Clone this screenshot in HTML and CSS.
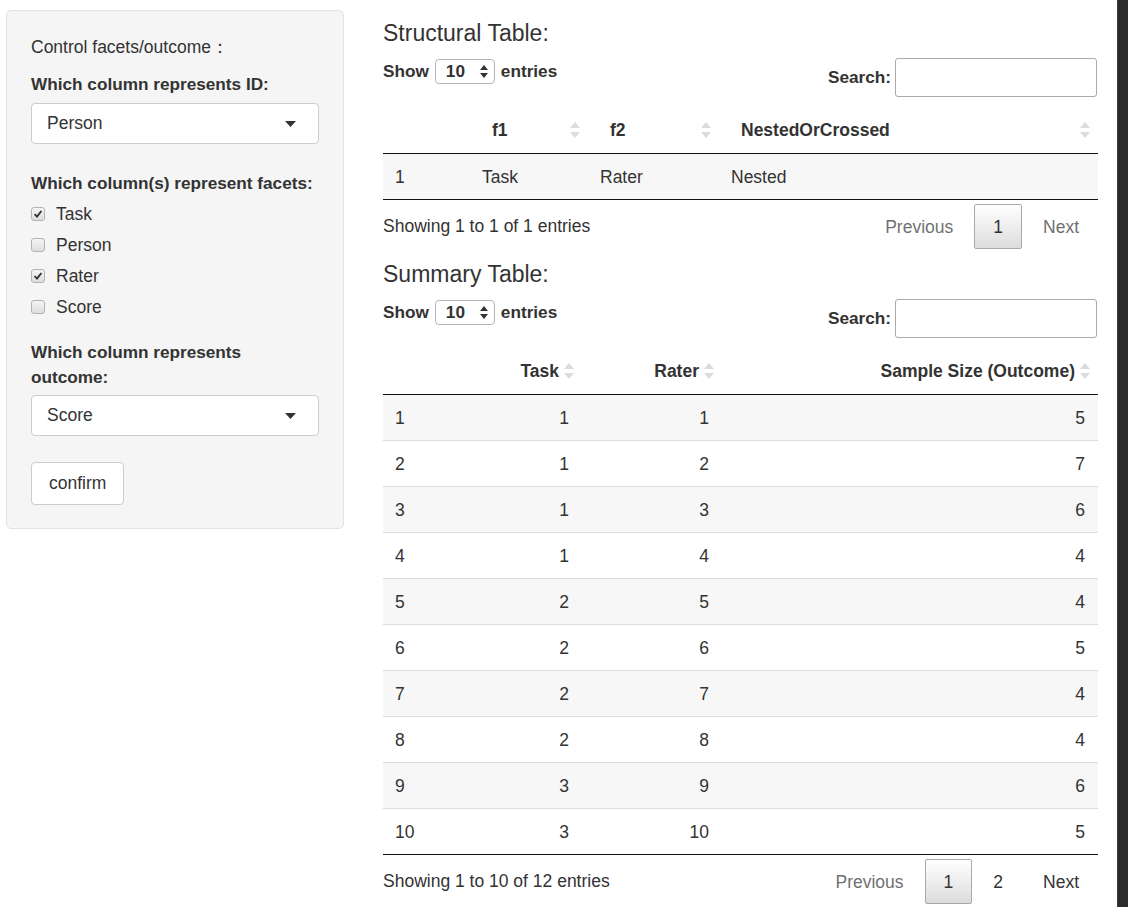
FILE: index.html
```html
<!DOCTYPE html>
<html>
<head>
<meta charset="utf-8">
<link rel="stylesheet" href="styles.css">
</head>
<body>
<div class="sidebar">
  <div class="well">
    <div class="intro">Control facets/outcome：</div>
    <div class="label first">Which column represents ID:</div>
    <div class="select"><span>Person</span><svg class="caret" width="11" height="6" viewBox="0 0 11 6"><polygon points="0,0 11,0 5.5,6" fill="#333"/></svg></div>
    <div class="label facets">Which column(s) represent facets:</div>
    <div class="checks">
      <div class="check"><span class="box"><svg width="12" height="12" viewBox="0 0 12 12"><path d="M2.6 6.2 L5 8.6 L9.4 3" fill="none" stroke="#333" stroke-width="1.9"/></svg></span>Task</div>
      <div class="check"><span class="box"></span>Person</div>
      <div class="check"><span class="box"><svg width="12" height="12" viewBox="0 0 12 12"><path d="M2.6 6.2 L5 8.6 L9.4 3" fill="none" stroke="#333" stroke-width="1.9"/></svg></span>Rater</div>
      <div class="check"><span class="box"></span>Score</div>
    </div>
    <div class="label outcome">Which column represents<br>outcome:</div>
    <div class="select second"><span>Score</span><svg class="caret" width="11" height="6" viewBox="0 0 11 6"><polygon points="0,0 11,0 5.5,6" fill="#333"/></svg></div>
    <button class="btn">confirm</button>
  </div>
</div>

<div class="main">
  <section class="dt first-section">
    <h3 class="title">Structural Table:</h3>
    <div class="controls">
      <div class="length">Show <span class="len-select">10<svg width="8" height="13" viewBox="0 0 8 13"><polygon points="4,0 8,5 0,5" fill="#333"/><polygon points="0,8 8,8 4,13" fill="#333"/></svg></span> entries</div>
      <div class="search">Search:<span class="search-input"></span></div>
    </div>
    <table class="grid struct">
      <colgroup><col style="width:87px"><col style="width:118px"><col style="width:131px"><col></colgroup>
      <thead>
        <tr><th></th><th class="sort">f1<svg class="sorticon" width="10" height="16" viewBox="0 0 10 16"><polygon points="5,0 10,6 0,6" fill="#dcdcdc"/><polygon points="0,10 10,10 5,16" fill="#dcdcdc"/></svg></th><th class="sort">f2<svg class="sorticon" width="10" height="16" viewBox="0 0 10 16"><polygon points="5,0 10,6 0,6" fill="#dcdcdc"/><polygon points="0,10 10,10 5,16" fill="#dcdcdc"/></svg></th><th class="sort">NestedOrCrossed<svg class="sorticon" width="10" height="16" viewBox="0 0 10 16"><polygon points="5,0 10,6 0,6" fill="#dcdcdc"/><polygon points="0,10 10,10 5,16" fill="#dcdcdc"/></svg></th></tr>
      </thead>
      <tbody>
        <tr class="odd"><td>1</td><td>Task</td><td>Rater</td><td>Nested</td></tr>
      </tbody>
    </table>
    <div class="footer">
      <div class="info">Showing 1 to 1 of 1 entries</div>
      <div class="paging"><span class="pg disabled">Previous</span><span class="pg current">1</span><span class="pg disabled">Next</span></div>
    </div>
  </section>

  <section class="dt second-section">
    <h3 class="title">Summary Table:</h3>
    <div class="controls">
      <div class="length">Show <span class="len-select">10<svg width="8" height="13" viewBox="0 0 8 13"><polygon points="4,0 8,5 0,5" fill="#333"/><polygon points="0,8 8,8 4,13" fill="#333"/></svg></span> entries</div>
      <div class="search">Search:<span class="search-input"></span></div>
    </div>
    <table class="grid summary">
      <colgroup><col style="width:87px"><col style="width:112px"><col style="width:140px"><col></colgroup>
      <thead>
        <tr><th></th><th class="sort num">Task<svg class="sorticon" width="10" height="16" viewBox="0 0 10 16"><polygon points="5,0 10,6 0,6" fill="#dcdcdc"/><polygon points="0,10 10,10 5,16" fill="#dcdcdc"/></svg></th><th class="sort num">Rater<svg class="sorticon" width="10" height="16" viewBox="0 0 10 16"><polygon points="5,0 10,6 0,6" fill="#dcdcdc"/><polygon points="0,10 10,10 5,16" fill="#dcdcdc"/></svg></th><th class="sort num">Sample Size (Outcome)<svg class="sorticon" width="10" height="16" viewBox="0 0 10 16"><polygon points="5,0 10,6 0,6" fill="#dcdcdc"/><polygon points="0,10 10,10 5,16" fill="#dcdcdc"/></svg></th></tr>
      </thead>
      <tbody>
        <tr class="odd"><td>1</td><td class="num">1</td><td class="num">1</td><td class="num">5</td></tr>
        <tr><td>2</td><td class="num">1</td><td class="num">2</td><td class="num">7</td></tr>
        <tr class="odd"><td>3</td><td class="num">1</td><td class="num">3</td><td class="num">6</td></tr>
        <tr><td>4</td><td class="num">1</td><td class="num">4</td><td class="num">4</td></tr>
        <tr class="odd"><td>5</td><td class="num">2</td><td class="num">5</td><td class="num">4</td></tr>
        <tr><td>6</td><td class="num">2</td><td class="num">6</td><td class="num">5</td></tr>
        <tr class="odd"><td>7</td><td class="num">2</td><td class="num">7</td><td class="num">4</td></tr>
        <tr><td>8</td><td class="num">2</td><td class="num">8</td><td class="num">4</td></tr>
        <tr class="odd"><td>9</td><td class="num">3</td><td class="num">9</td><td class="num">6</td></tr>
        <tr><td>10</td><td class="num">3</td><td class="num">10</td><td class="num">5</td></tr>
      </tbody>
    </table>
    <div class="footer">
      <div class="info">Showing 1 to 10 of 12 entries</div>
      <div class="paging"><span class="pg disabled">Previous</span><span class="pg current">1</span><span class="pg">2</span><span class="pg">Next</span></div>
    </div>
  </section>
</div>

<div class="edge"></div>
</body>
</html>
```
FILE: styles.css
```css
* { box-sizing: border-box; }

body {
  margin: 0;
  padding-left: 6px;
  font-family: "Liberation Sans", Arial, sans-serif;
  font-size: 17.5px;
  color: #333;
  display: flex;
  min-height: 100vh;
  background: #fff;
}

/* Sidebar */
.sidebar {
  width: 338px;
  flex: none;
  padding-top: 10px;
}

.well {
  background: #f5f5f5;
  border: 1px solid #e3e3e3;
  border-radius: 5px;
  padding: 24px 24px 23px;
}

.intro {
  line-height: 24px;
}

.label {
  font-weight: bold;
  font-size: 17.2px;
  line-height: 25px;
}
.label.first { margin-top: 13px; }
.label.facets { margin-top: 27px; }
.label.outcome { margin-top: 18px; }

.select {
  margin-top: 6px;
  height: 41px;
  background: #fff;
  border: 1px solid #ccc;
  border-radius: 4px;
  display: flex;
  align-items: center;
  justify-content: space-between;
  padding: 0 22px 0 15px;
}
.select.second { margin-top: 5px; }

.checks {
  margin-top: 2px;
}

.check {
  height: 31px;
  display: flex;
  align-items: center;
  gap: 11px;
  padding-top: 1px;
}

.box {
  width: 14px;
  height: 14px;
  border: 1px solid #b3b3b3;
  border-radius: 3px;
  background: linear-gradient(#f4f4f4, #dedede);
  display: flex;
  align-items: center;
  justify-content: center;
}
.box svg { display: block; }

.btn {
  margin-top: 26px;
  height: 43px;
  padding: 0 17px;
  background: #fff;
  border: 1px solid #ccc;
  border-radius: 4px;
  font-family: inherit;
  font-size: 17.5px;
  color: #333;
}

/* Main */
.main {
  width: 715px;
  flex: none;
  margin-left: 39px;
}

.title {
  font-size: 23px;
  font-weight: normal;
  line-height: 26px;
  margin: 0;
}
.first-section .title { margin-top: 20px; }
.second-section .title { margin-top: 12px; }

.controls {
  display: flex;
  justify-content: space-between;
  align-items: flex-start;
  margin-top: 12px;
}

.length {
  display: flex;
  align-items: center;
  gap: 6px;
  font-weight: bold;
  font-size: 17.2px;
  height: 25px;
  margin-top: 1px;
}

.len-select {
  width: 60px;
  height: 25px;
  border: 1px solid #b5b5b5;
  border-radius: 4px;
  display: flex;
  align-items: center;
  justify-content: space-between;
  padding: 0 6px 0 10px;
  font-weight: bold;
}

.search {
  display: flex;
  align-items: center;
  gap: 4px;
  font-weight: bold;
  font-size: 17.2px;
  margin-right: 1px;
}

.search-input {
  width: 202px;
  height: 39px;
  border: 1px solid #aaa;
  border-radius: 3px;
  background: #fff;
}

.grid {
  width: 715px;
  table-layout: fixed;
  border-collapse: separate;
  border-spacing: 0;
  border-bottom: 1px solid #111;
  margin-top: 10px;
}

.grid th {
  position: relative;
  height: 47px;
  padding: 0 22px;
  line-height: 46px;
  border-bottom: 1px solid #111;
  text-align: left;
  font-weight: bold;
  white-space: nowrap;
}

.grid th.num {
  text-align: right;
  padding-right: 23px;
}

.sorticon {
  position: absolute;
  right: 8px;
  top: 15px;
}

.grid td {
  padding: 1px 12px 0;
  height: 45px;
  line-height: 44px;
}

.grid td.num {
  text-align: right;
  padding-right: 13px;
}

.grid tbody tr + tr td {
  border-top: 1px solid #ddd;
  height: 46px;
}

.grid tr.odd td {
  background: #f7f7f7;
}

.footer {
  display: flex;
  justify-content: space-between;
  align-items: center;
  margin-top: 4px;
}

.paging {
  display: flex;
}

.pg {
  padding: 8.5px 18px;
  line-height: 26px;
  border: 1px solid transparent;
  border-radius: 2px;
  margin-left: 2px;
  color: #333;
}

.pg.disabled {
  color: #707070;
}

.pg.current {
  border-color: #a9a9a9;
  background: linear-gradient(#fff, #dcdcdc);
}

/* right window edge */
.edge {
  width: 11px;
  flex: none;
  margin-left: 19px;
  background: #2b2b2b;
  border-left: 1px solid #3a3a3a;
}
```
